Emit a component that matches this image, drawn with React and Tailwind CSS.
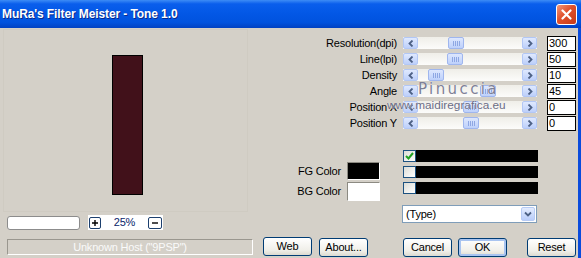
import React from 'react';

const sliders = [
  { label: 'Resolution(dpi)', thumb: 45, value: '300' },
  { label: 'Line(lpi)', thumb: 44, value: '50' },
  { label: 'Density', thumb: 25, value: '10' },
  { label: 'Angle', thumb: 77, value: '45' },
  { label: 'Position X', thumb: 60, value: '0' },
  { label: 'Position Y', thumb: 60, value: '0' },
];

function ArrowBtn({ dir }) {
  return (
    <div className="w-[15px] h-full shrink-0 rounded-[2px] border border-[#b2c7f5] bg-[linear-gradient(to_bottom,#dfe9fe,#bccffa)] flex items-center justify-center">
      <svg width="6" height="7" viewBox="0 0 6 7">
        <path
          d={dir === 'left' ? 'M4.5 0.5 L1.5 3.5 L4.5 6.5' : 'M1.5 0.5 L4.5 3.5 L1.5 6.5'}
          stroke="#4d6185"
          strokeWidth="1.8"
          fill="none"
        />
      </svg>
    </div>
  );
}

function Slider({ thumb }) {
  return (
    <div className="w-[134px] h-[12px] flex bg-[linear-gradient(to_bottom,#efeee8,#fcfcfa)]">
      <ArrowBtn dir="left" />
      <div className="relative flex-1">
        {/* thumb */}
        <div
          className="absolute top-0 h-full w-[16px] rounded-[2px] border border-[#9fb6ee] bg-[linear-gradient(to_bottom,#dde7fe,#bdd0fb)] flex items-center justify-center gap-[1px]"
          style={{ left: thumb - 15 }}
        >
          {[0, 1, 2, 3].map((i) => (
            <span key={i} className="w-[1px] h-[5px] bg-[#8ea7e3]" />
          ))}
        </div>
      </div>
      <ArrowBtn dir="right" />
    </div>
  );
}

function Button({ children, def }) {
  return (
    <button
      className={`h-[19px] w-[49px] rounded-[3px] border border-[#003c74] bg-[linear-gradient(to_bottom,#ffffff,#f0efe9_70%,#dcdad0)] text-[11px] text-black leading-none tracking-[-0.2px] ${
        def ? 'shadow-[inset_0_0_0_2px_#a9c4f0]' : ''
      }`}
    >
      {children}
    </button>
  );
}

function Check({ checked }) {
  return (
    <div className="flex h-[12px]">
      <div className="w-[13px] h-full border border-[#1c5180] bg-[linear-gradient(to_bottom_right,#dcdcd6,#ffffff)] flex items-center justify-center">
        {checked && (
          <svg width="9" height="8" viewBox="0 0 9 8">
            <path d="M1 4 L3.5 6.5 L8 1" stroke="#21a121" strokeWidth="2" fill="none" />
          </svg>
        )}
      </div>
      <div className="w-[122px] h-full bg-black" />
    </div>
  );
}

export default function App() {
  return (
    <div className="relative w-[581px] h-[258px] flex flex-col font-['Liberation_Sans',Arial,sans-serif] select-none overflow-hidden">
      {/* Title bar */}
      <div className="h-[28px] shrink-0 flex items-center justify-between pl-[2px] pr-[4px] bg-[linear-gradient(to_bottom,#3d8cf6_0%,#0a5eec_14%,#0358e6_45%,#0052de_80%,#0041c2_100%)]">
        <span className="text-white font-bold text-[12px] tracking-[-0.1px] [text-shadow:1px_1px_0_#0b2a8a]">
          MuRa's Filter Meister - Tone 1.0
        </span>
        <div className="w-[21px] h-[21px] rounded-[3px] border border-white bg-[linear-gradient(to_bottom_right,#f2987a,#e0502b_45%,#c63a16)] flex items-center justify-center">
          <svg width="11" height="11" viewBox="0 0 11 11">
            <path d="M1.5 1.5 L9.5 9.5 M9.5 1.5 L1.5 9.5" stroke="white" strokeWidth="2.2" strokeLinecap="round" />
          </svg>
        </div>
      </div>

      {/* Body */}
      <div className="flex-1 flex bg-[#d4d0c8] border-r-[3px] border-[#0a4bdc]">
        {/* Left column */}
        <div className="w-[258px] shrink-0 flex flex-col">
          <div className="mt-[1px] ml-[3px] w-[245px] h-[183px] border border-[#cfcbc2]">
            <div className="ml-[108px] mt-[25px] w-[31px] h-[140px] border border-black bg-[#41111a]" />
          </div>
          <div className="mt-[3px] flex items-center h-[15px]">
            <div className="ml-[7px] w-[73px] h-[14px] rounded-[3px] border border-[#8c8c8c] bg-white" />
            <div className="ml-[8px] w-[75px] h-[15px] bg-white flex items-center pl-[1px] pr-[1px] justify-between">
              <div className="w-[12px] h-[12px] rounded-[2px] border border-[#1c3f6e] flex items-center justify-center">
                <svg width="6" height="6" viewBox="0 0 6 6">
                  <path d="M0 3 H6 M3 0 V6" stroke="black" strokeWidth="1.4" />
                </svg>
              </div>
              <span className="text-[11px] text-[#0a246a] tracking-[-0.2px] leading-none">25%</span>
              <div className="w-[14px] h-[12px] rounded-[2px] border border-[#1c3f6e] flex items-center justify-center">
                <svg width="6" height="2" viewBox="0 0 6 2">
                  <path d="M0 1 H6" stroke="black" strokeWidth="1.4" />
                </svg>
              </div>
            </div>
          </div>
          <div className="mt-[9px] ml-[7px] w-[246px] h-[16px] border border-t-[#9a978f] border-l-[#9a978f] border-b-white border-r-white flex items-center justify-center">
            <span className="text-[11px] text-[#fafafa] tracking-[-0.2px] leading-none">Unknown Host ("9PSP")</span>
          </div>
        </div>

        {/* Right column */}
        <div className="flex-1 flex flex-col">
          <div className="mt-[7px] flex flex-col">
            {sliders.map((s) => (
              <div key={s.label} className="h-[16px] flex items-center">
                <span className="w-[139px] text-right text-[11px] text-black tracking-[-0.2px] leading-none">
                  {s.label}
                </span>
                <div className="ml-[6px]">
                  <Slider thumb={s.thumb} />
                </div>
                <div className="ml-[10px] w-[29px] h-[15px] border border-black bg-white text-[11px] leading-[13px] pl-[1px] text-black">
                  {s.value}
                </div>
              </div>
            ))}
          </div>

          <div className="mt-[19px] flex">
            <div className="w-[144px] flex flex-col items-end pr-[22px] pt-[12px] gap-[2px]">
              <div className="flex items-center">
                <span className="text-[11px] tracking-[-0.2px] text-black mr-[6px]">FG Color</span>
                <div className="w-[33px] h-[18px] border border-t-[#8c8a82] border-l-[#8c8a82] border-b-white border-r-white bg-black" />
              </div>
              <div className="flex items-center">
                <span className="text-[11px] tracking-[-0.2px] text-black mr-[6px]">BG Color</span>
                <div className="w-[33px] h-[19px] border border-t-[#8c8a82] border-l-[#8c8a82] border-b-white border-r-white bg-white" />
              </div>
            </div>
            <div className="flex flex-col">
              <div className="ml-[1px] flex flex-col gap-[4px]">
                <Check checked />
                <Check />
                <Check />
              </div>
              <div className="mt-[11px] w-[135px] h-[18px] border border-[#7f9db9] bg-white flex items-center justify-between pl-[3px] pr-[1px]">
                <span className="text-[11px] text-black tracking-[-0.2px]">(Type)</span>
                <div className="w-[14px] h-[14px] rounded-[2px] border border-[#b7cbf5] bg-[linear-gradient(to_bottom,#e3ecfe,#b9cdfa)] flex items-center justify-center">
                  <svg width="8" height="6" viewBox="0 0 8 6">
                    <path d="M1 1.5 L4 4.5 L7 1.5" stroke="#4d6185" strokeWidth="1.8" fill="none" />
                  </svg>
                </div>
              </div>
            </div>
          </div>

          <div className="mt-[11px] flex items-center pl-[5px]">
            <Button>Web</Button>
            <div className="ml-[7px]">
              <Button>About...</Button>
            </div>
            <div className="ml-[35px]">
              <Button>Cancel</Button>
            </div>
            <div className="ml-[6px]">
              <Button def>OK</Button>
            </div>
            <div className="ml-[20px]">
              <Button>Reset</Button>
            </div>
          </div>
        </div>
      </div>

      {/* Watermark over the sliders */}
      <div className="absolute left-[418px] top-[82px] font-['DejaVu_Sans',sans-serif] text-[15px] leading-none text-[#7d8096] tracking-[2.4px] [text-shadow:0_0_1px_#ffffff]">
        Pinuccia
      </div>
      <div className="absolute left-[387px] top-[100px] text-[11.8px] leading-none text-[#6a6c84] [text-shadow:0_0_1px_#ffffff]">
        www.maidiregrafica.eu
      </div>
    </div>
  );
}
